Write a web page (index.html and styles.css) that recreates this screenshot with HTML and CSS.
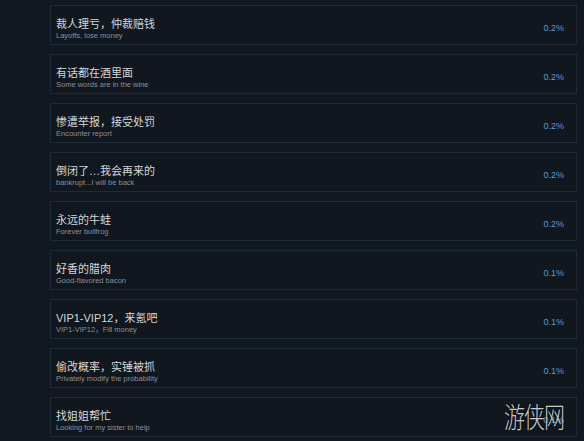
FILE: index.html
```html
<!DOCTYPE html>
<html lang="zh">
<head>
    <meta charset="UTF-8">
    <title>成就列表</title>
    <link rel="stylesheet" href="styles.css">
</head>
<body>
    <div class="list">
        <div class="row">
            <div class="info">
                <div class="title">裁人理亏，仲裁赔钱</div>
                <div class="desc">Layoffs, lose money</div>
            </div>
            <div class="pct">0.2%</div>
        </div>
        <div class="row">
            <div class="info">
                <div class="title">有话都在酒里面</div>
                <div class="desc">Some words are in the wine</div>
            </div>
            <div class="pct">0.2%</div>
        </div>
        <div class="row">
            <div class="info">
                <div class="title">惨遭举报，接受处罚</div>
                <div class="desc">Encounter report</div>
            </div>
            <div class="pct">0.2%</div>
        </div>
        <div class="row">
            <div class="info">
                <div class="title">倒闭了…我会再来的</div>
                <div class="desc">bankrupt...I will be back</div>
            </div>
            <div class="pct">0.2%</div>
        </div>
        <div class="row">
            <div class="info">
                <div class="title">永远的牛蛙</div>
                <div class="desc">Forever bullfrog</div>
            </div>
            <div class="pct">0.2%</div>
        </div>
        <div class="row">
            <div class="info">
                <div class="title">好香的腊肉</div>
                <div class="desc">Good-flavored bacon</div>
            </div>
            <div class="pct">0.1%</div>
        </div>
        <div class="row">
            <div class="info">
                <div class="title">VIP1-VIP12，来氪吧</div>
                <div class="desc">VIP1-VIP12，Fill money</div>
            </div>
            <div class="pct">0.1%</div>
        </div>
        <div class="row">
            <div class="info">
                <div class="title">偷改概率，实锤被抓</div>
                <div class="desc">Privately modify the probability</div>
            </div>
            <div class="pct">0.1%</div>
        </div>
        <div class="row">
            <div class="info">
                <div class="title">找姐姐帮忙</div>
                <div class="desc">Looking for my sister to help</div>
            </div>
            <div class="pct">0.1%</div>
        </div>
    </div>

    <div class="watermark">游侠网</div>
</body>
</html>
```

FILE: styles.css
```css
* {
    margin: 0;
    padding: 0;
    box-sizing: border-box;
}

body {
    font-family: "Liberation Sans", "Noto Sans CJK SC", sans-serif;
    background-color: #111820;
    height: 100vh;
    overflow: hidden;
}

.list {
    padding: 5px 7px 0 50px;
    display: flex;
    flex-direction: column;
    gap: 9px;
}

.row {
    height: 40px;
    background: #10171f;
    border: 1px solid #1d2b39;
    display: flex;
    align-items: center;
    justify-content: space-between;
    padding: 7px 12px 0 5px;
}

.title {
    font-size: 11px;
    line-height: 13px;
    color: #d3d6d9;
}

.desc {
    font-size: 7.5px;
    line-height: 9px;
    color: #8a9098;
}

.pct {
    font-size: 9px;
    color: #5f9ad2;
    margin-top: -2px;
}

/* 水印 */
.watermark {
    position: absolute;
    left: 504px;
    top: 396px;
    font-size: 21px;
    font-weight: 300;
    color: rgba(235, 235, 235, 0.85);
    letter-spacing: -1px;
    transform: scale(1, 1.35);
    transform-origin: top left;
    text-shadow: 0 0 2px rgba(0,0,0,0.6);
}
```
